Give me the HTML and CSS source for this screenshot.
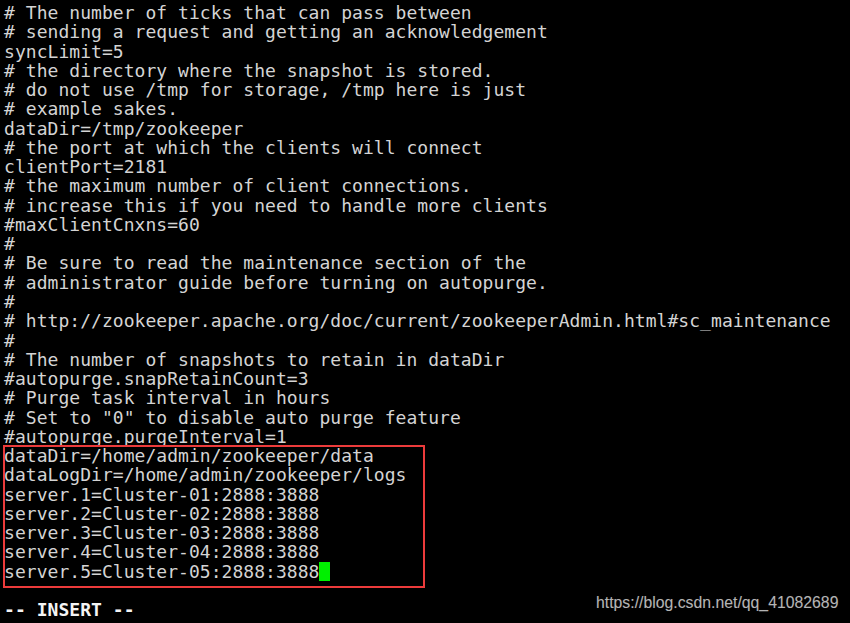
FILE: index.html
```html
<!DOCTYPE html>
<html>
<head>
<meta charset="utf-8">
<link rel="stylesheet" href="styles.css">
</head>
<body>
<div class="screen">
  <div class="terminal">
    <div class="line"># The number of ticks that can pass between</div>
    <div class="line"># sending a request and getting an acknowledgement</div>
    <div class="line">syncLimit=5</div>
    <div class="line"># the directory where the snapshot is stored.</div>
    <div class="line"># do not use /tmp for storage, /tmp here is just</div>
    <div class="line"># example sakes.</div>
    <div class="line">dataDir=/tmp/zookeeper</div>
    <div class="line"># the port at which the clients will connect</div>
    <div class="line">clientPort=2181</div>
    <div class="line"># the maximum number of client connections.</div>
    <div class="line"># increase this if you need to handle more clients</div>
    <div class="line">#maxClientCnxns=60</div>
    <div class="line">#</div>
    <div class="line"># Be sure to read the maintenance section of the</div>
    <div class="line"># administrator guide before turning on autopurge.</div>
    <div class="line">#</div>
    <div class="line"># http://zookeeper.apache.org/doc/current/zookeeperAdmin.html#sc_maintenance</div>
    <div class="line">#</div>
    <div class="line"># The number of snapshots to retain in dataDir</div>
    <div class="line">#autopurge.snapRetainCount=3</div>
    <div class="line"># Purge task interval in hours</div>
    <div class="line"># Set to "0" to disable auto purge feature</div>
    <div class="line">#autopurge.purgeInterval=1</div>
    <div class="selection">
      <div class="line">dataDir=/home/admin/zookeeper/data</div>
      <div class="line">dataLogDir=/home/admin/zookeeper/logs</div>
      <div class="line">server.1=Cluster-01:2888:3888</div>
      <div class="line">server.2=Cluster-02:2888:3888</div>
      <div class="line">server.3=Cluster-03:2888:3888</div>
      <div class="line">server.4=Cluster-04:2888:3888</div>
      <div class="line">server.5=Cluster-05:2888:3888<span class="cursor"> </span></div>
    </div>
    <div class="line">&nbsp;</div>
    <div class="line mode">-- INSERT --</div>
  </div>
  <div class="watermark">https://blog.csdn.net/qq_41082689</div>
</div>
</body>
</html>
```
FILE: styles.css
```css
html, body {
  margin: 0;
  padding: 0;
  background: #000;
}

.screen {
  position: relative;
  width: 850px;
  height: 623px;
  overflow: hidden;
  background: #000;
}

.terminal {
  padding: 3px 0 0 4px;
  font-family: "DejaVu Sans Mono", monospace;
  font-size: 18px;
  letter-spacing: 0.04px;
  color: #d4d4d4;
}

.line {
  height: 19.28px;
  line-height: 19.28px;
  white-space: pre;
}

.selection {
  position: relative;
}

.selection::after {
  content: "";
  position: absolute;
  left: -1px;
  top: -1.4px;
  width: 422px;
  height: 143px;
  box-sizing: border-box;
  border: 2.7px solid #ec3b3b;
}

.cursor {
  display: inline-block;
  width: 10.5px;
  height: 19px;
  vertical-align: top;
  background: #00f000;
}

.mode {
  font-weight: bold;
  color: #f4f4f4;
}

.watermark {
  position: absolute;
  left: 596px;
  top: 594px;
  font-family: "Liberation Sans", Arial, sans-serif;
  font-size: 15.8px;
  color: #b4b4b4;
  text-shadow: 0 0 1px #222;
}
```
